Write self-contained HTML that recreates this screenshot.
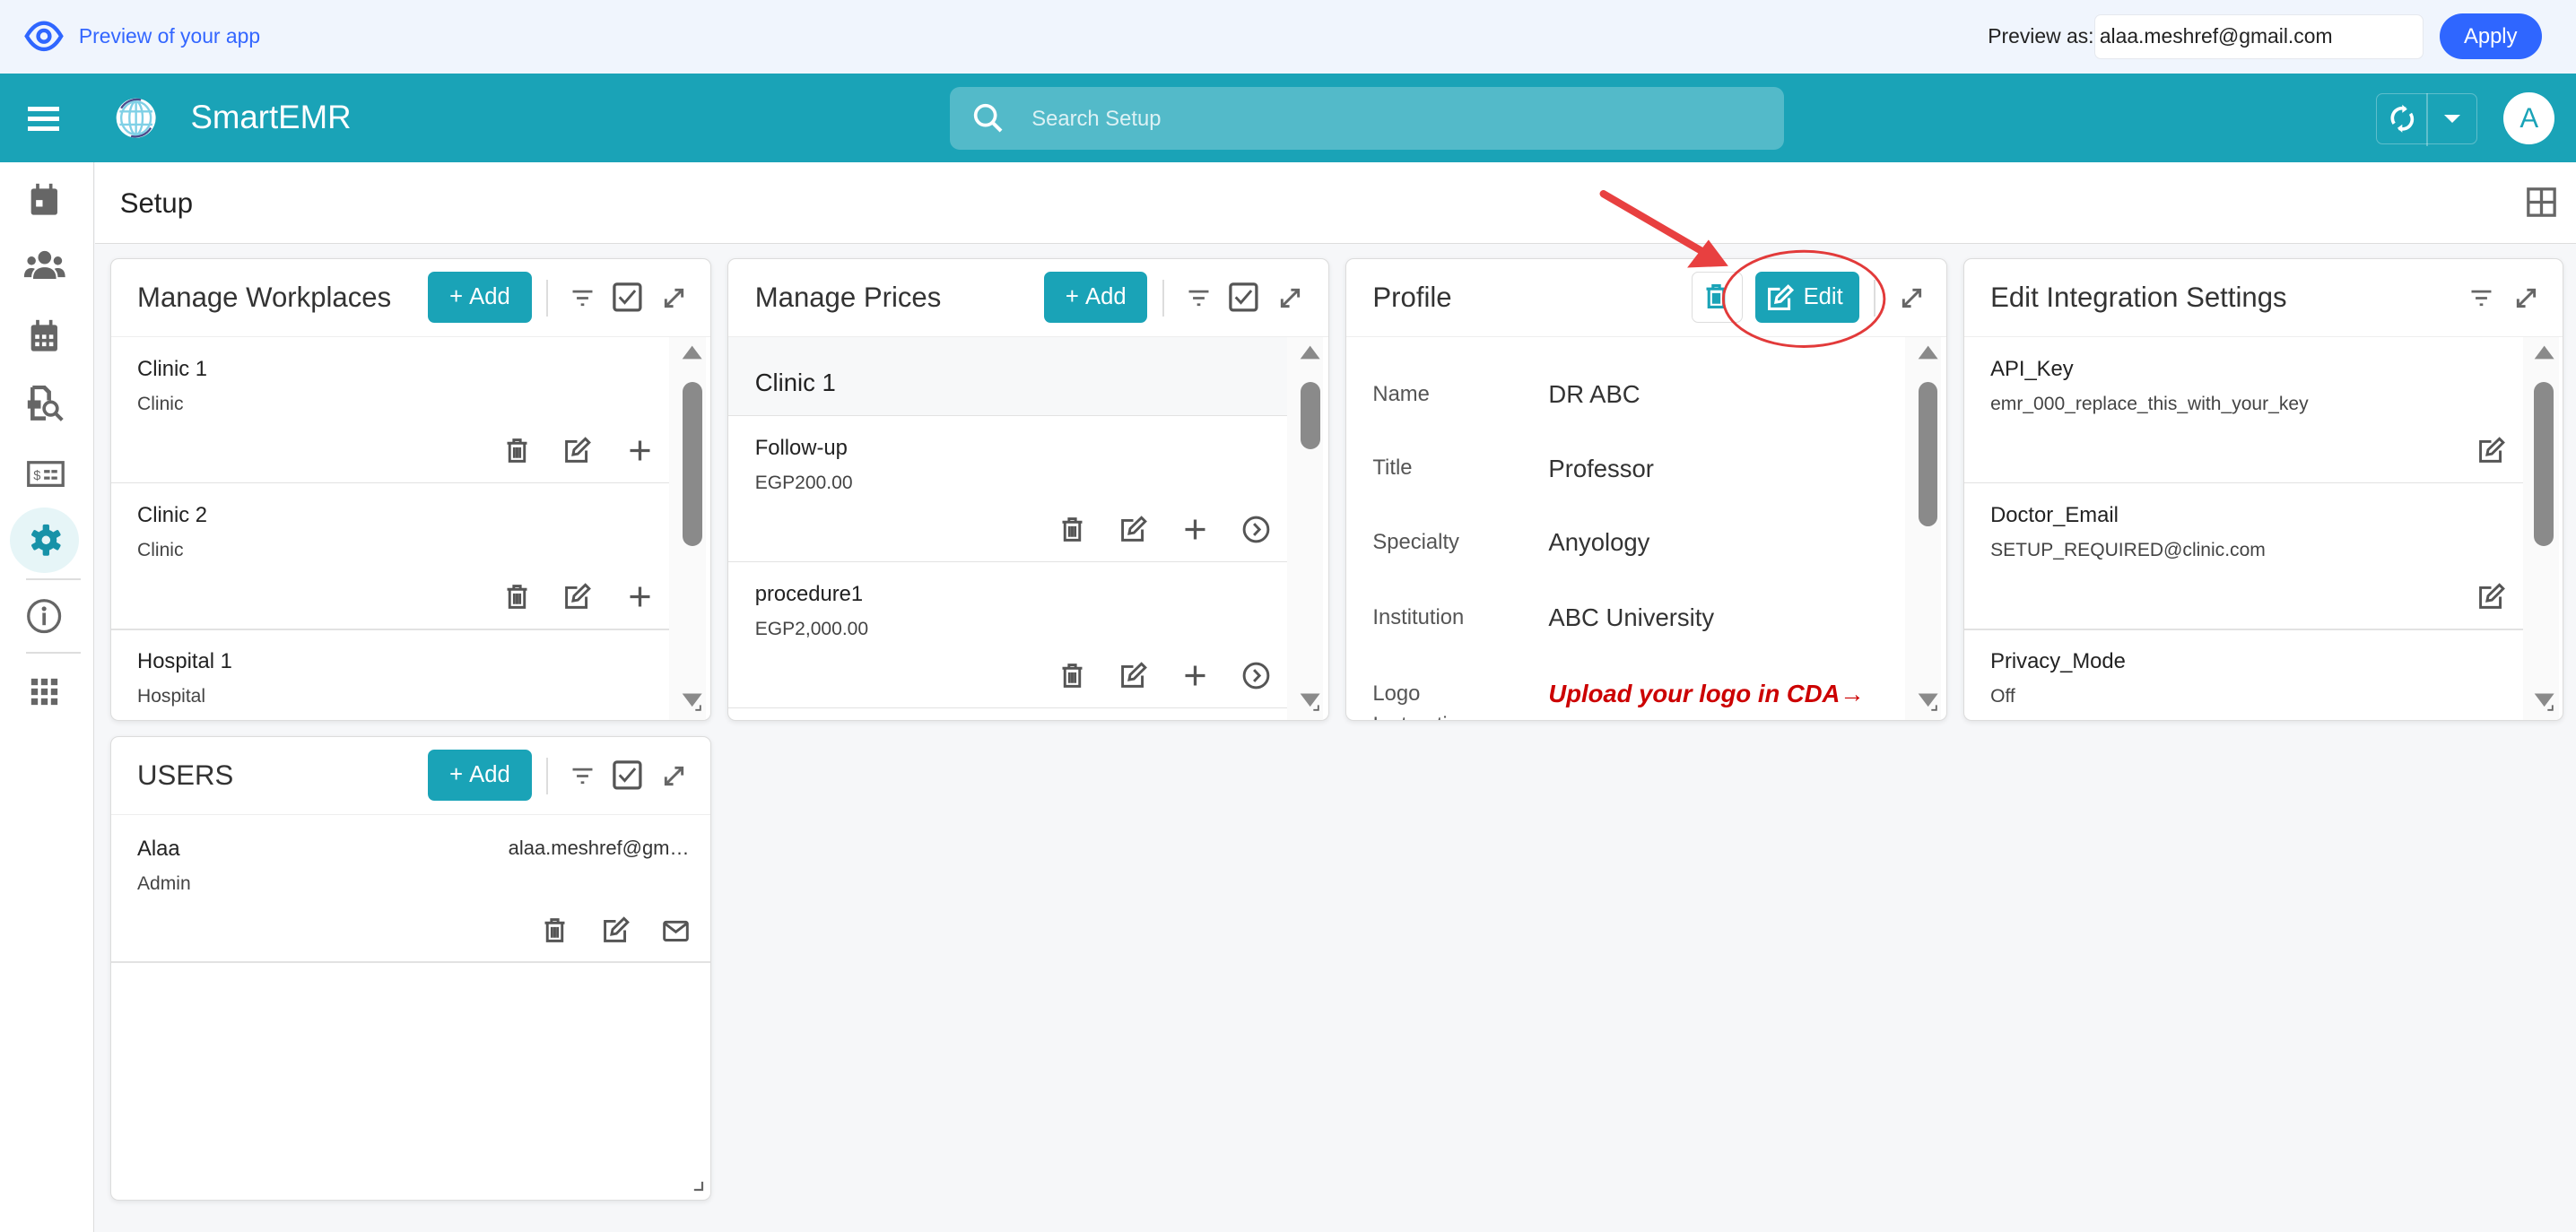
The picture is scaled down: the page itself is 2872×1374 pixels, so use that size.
<!DOCTYPE html>
<html><head><meta charset="utf-8">
<style>
html,body{margin:0;padding:0;background:#f6f7f9;overflow:hidden}
body{width:2872px;height:1374px}
#w{position:absolute;left:0;top:0;width:1568px;height:750px;zoom:1.83163;font-family:"Liberation Sans",sans-serif;color:#222}
.a{position:absolute}
.top{left:0;top:0;width:1568px;height:45px;background:#f0f5fd}
.hdr{left:0;top:45px;width:1568px;height:54px;background:#1aa3b7}
.side{left:0;top:99px;width:57px;height:651px;background:#fff;border-right:1px solid #ddd}
.setup{left:58px;top:99px;width:1510px;height:49px;background:#fff;border-bottom:1px solid #ddd}
.card{background:#fff;border:1px solid #dcdcdc;border-radius:5px;box-shadow:0 1px 3px rgba(0,0,0,.08);overflow:hidden}
.ct{font-size:17px;color:#333;position:absolute;left:16px;top:14px}
.hl{position:absolute;left:0;right:0;top:47px;border-top:1px solid #eee}
.add{position:absolute;width:63px;height:31px;background:#1aa3b7;border-radius:4px;color:#fff;font-size:14px;line-height:31px;text-align:center}
.vd{position:absolute;width:1px;height:22px;background:#ddd}
.it{position:absolute;font-size:13px;color:#222}
.sub{position:absolute;font-size:11.5px;color:#444}
.sep{position:absolute;height:1px;background:#e2e2e2}
svg.i{position:absolute;width:18px;height:18px}
.sb{position:absolute;width:22px;background:#fafafa}
</style></head><body><div id="w">
<svg width="0" height="0" style="position:absolute">
<defs>
<symbol id="trash" viewBox="0 0 18 18"><g fill="none" stroke="#555" stroke-width="1.6"><path d="M3 4.5h12M7 4.5V2.5h4v2M4.5 4.5v11h9v-11M7.3 7v6.5M9 7v6.5M10.7 7v6.5"/></g></symbol>
<symbol id="edit" viewBox="0 0 18 18"><g fill="none" stroke="#555" stroke-width="1.6"><path d="M9 3.5H2.5v12h12V9"/><path d="M6.5 11.5l.6-3L14 1.8l2.3 2.3-6.9 6.9z"/></g></symbol>
<symbol id="plus" viewBox="0 0 18 18"><path d="M9 3v12M3 9h12" stroke="#555" stroke-width="1.8"/></symbol>
<symbol id="chev" viewBox="0 0 18 18"><circle cx="9" cy="9" r="7.3" fill="none" stroke="#555" stroke-width="1.6"/><path d="M7.7 5.5L11 9l-3.3 3.5" fill="none" stroke="#555" stroke-width="1.6"/></symbol>
<symbol id="filt" viewBox="0 0 18 18"><path d="M3 5h12M5.5 9h7M8 13h2" stroke="#666" stroke-width="1.5"/></symbol>
<symbol id="chk" viewBox="0 0 18 18"><rect x="1.5" y="1.5" width="15" height="15" rx="1.5" fill="none" stroke="#555" stroke-width="1.7"/><path d="M4.5 9l3 3.2 6-7" fill="none" stroke="#555" stroke-width="1.5"/></symbol>
<symbol id="exp" viewBox="0 0 18 18"><path d="M4 14L14 4M9.5 4H14v4.5M4 9.5V14h4.5" fill="none" stroke="#666" stroke-width="1.6"/></symbol>
<symbol id="mail" viewBox="0 0 18 18"><rect x="2" y="4" width="14" height="11" rx="1" fill="none" stroke="#555" stroke-width="1.6"/><path d="M2.5 5l6.5 5 6.5-5" fill="none" stroke="#555" stroke-width="1.6"/></symbol>
<symbol id="sc" viewBox="0 0 16 230"><path d="M8 3l6 8H2z" fill="#8a8a8a"/></symbol>
</defs></svg>

<!-- top preview bar -->
<div class="a top"></div>
<svg class="a" style="left:15px;top:12px" width="24" height="20" viewBox="0 0 24 20"><path d="M1.5 10C5 4 8.5 2 12 2s7 2 10.5 8C19 16 15.5 18 12 18S5 16 1.5 10z" fill="none" stroke="#2f66ff" stroke-width="2.4"/><circle cx="12" cy="10" r="3.5" fill="none" stroke="#2f66ff" stroke-width="2.4"/></svg>
<div class="a" style="left:48px;top:15px;font-size:12.5px;color:#3366ff">Preview of your app</div>
<div class="a" style="left:1210px;top:15px;font-size:12.5px;color:#222">Preview as:</div>
<div class="a" style="left:1275px;top:9px;width:199px;height:26px;background:#fff;border:1px solid #e5e8ee;border-radius:4px"></div>
<div class="a" style="left:1278px;top:15px;font-size:12.5px;color:#222">alaa.meshref@gmail.com</div>
<div class="a" style="left:1485px;top:8px;width:62px;height:28px;background:#2f66ff;border-radius:14px;color:#fff;font-size:13px;text-align:center;line-height:28px">Apply</div>

<!-- header -->
<div class="a hdr"></div>
<div class="a" style="left:17px;top:65px;width:19px;height:2.5px;background:#fff;box-shadow:0 6px 0 #fff,0 12px 0 #fff"></div>
<svg class="a" style="left:69px;top:58px" width="28" height="28" viewBox="0 0 28 28"><circle cx="14" cy="14" r="12" fill="#fff"/><g fill="none" stroke="#7fd0e6" stroke-width="1.3"><ellipse cx="14" cy="14" rx="9" ry="10"/><ellipse cx="14" cy="14" rx="4" ry="10"/><path d="M4 10h20M4 18h20M14 4v20"/></g><path d="M5 8a11 11 0 0 1 12-5M23 20a11 11 0 0 1-12 5" fill="none" stroke="#4a4a8a" stroke-width="1.2"/></svg>
<div class="a" style="left:116px;top:60px;font-size:20px;color:#fff">SmartEMR</div>
<div class="a" style="left:578px;top:53px;width:508px;height:38px;background:rgba(255,255,255,.25);border-radius:6px"></div>
<svg class="a" style="left:592px;top:62px" width="20" height="20" viewBox="0 0 20 20"><circle cx="8" cy="8" r="6" fill="none" stroke="#fff" stroke-width="2"/><path d="M12.5 12.5l5 5" stroke="#fff" stroke-width="2.2"/></svg>
<div class="a" style="left:628px;top:65px;font-size:13px;color:rgba(255,255,255,.8)">Search Setup</div>
<div class="a" style="left:1446px;top:57px;width:61px;height:30px;border:1px solid rgba(255,255,255,.3);border-radius:4px"></div>
<div class="a" style="left:1477px;top:57px;width:1px;height:32px;background:rgba(255,255,255,.3)"></div>
<svg class="a" style="left:1452px;top:62px" width="20" height="20" viewBox="0 0 20 20"><path d="M5 13a6 6 0 0 1 7-9M15 7a6 6 0 0 1-7 9" fill="none" stroke="#fff" stroke-width="2"/><path d="M10 1.5l3 2.7-3 2.3zM10 18.5l-3-2.7 3-2.3z" fill="#fff"/></svg>
<div class="a" style="left:1488px;top:70px;width:0;height:0;border-left:5px solid transparent;border-right:5px solid transparent;border-top:5px solid #fff"></div>
<div class="a" style="left:1524px;top:56px;width:31px;height:32px;border-radius:50%;background:#fff;color:#1aa3b7;font-size:17px;text-align:center;line-height:32px">A</div>

<!-- sidebar -->
<div class="a side"></div>
<svg class="a" style="left:17px;top:111px" width="20" height="22" viewBox="0 0 20 22"><rect x="2" y="4" width="16" height="16" rx="1.5" fill="#666"/><rect x="5" y="1" width="2" height="4" fill="#666"/><rect x="13" y="1" width="2" height="4" fill="#666"/><rect x="5" y="11" width="4" height="4" fill="#fff"/></svg>
<svg class="a" style="left:14px;top:152px" width="26" height="20" viewBox="0 0 26 20"><circle cx="13" cy="5" r="4" fill="#666"/><circle cx="5" cy="7" r="2.6" fill="#666"/><circle cx="21" cy="7" r="2.6" fill="#666"/><path d="M6 18c0-5 3-7 7-7s7 2 7 7z M0.5 17c0-4 2-5.5 4.5-5.5 1.5 0 2 .5 2 .5-1.5 1.5-2 3-2 5zM25.5 17c0-4-2-5.5-4.5-5.5-1.5 0-2 .5-2 .5 1.5 1.5 2 3 2 5z" fill="#666"/></svg>
<svg class="a" style="left:17px;top:194px" width="20" height="22" viewBox="0 0 20 22"><rect x="2" y="4" width="16" height="16" rx="1.5" fill="#666"/><rect x="5" y="1" width="2" height="4" fill="#666"/><rect x="13" y="1" width="2" height="4" fill="#666"/><g fill="#fff"><rect x="4.5" y="10" width="2.5" height="2.5"/><rect x="8.7" y="10" width="2.5" height="2.5"/><rect x="13" y="10" width="2.5" height="2.5"/><rect x="4.5" y="14.5" width="2.5" height="2.5"/><rect x="8.7" y="14.5" width="2.5" height="2.5"/><rect x="13" y="14.5" width="2.5" height="2.5"/></g></svg>
<svg class="a" style="left:16px;top:235px" width="24" height="22" viewBox="0 0 24 22"><path d="M4 1h7l3 3v5" fill="none" stroke="#666" stroke-width="2.5"/><path d="M4 1v19h8" fill="none" stroke="#666" stroke-width="2.5"/><rect x="1" y="9" width="8" height="5" fill="#666"/><circle cx="15" cy="14" r="4" fill="none" stroke="#666" stroke-width="2"/><path d="M18 17l4 4" stroke="#666" stroke-width="2.2"/></svg>
<svg class="a" style="left:16px;top:280px" width="24" height="18" viewBox="0 0 24 18"><rect x="1.5" y="1.5" width="21" height="14" fill="none" stroke="#666" stroke-width="1.8"/><text x="4.5" y="12" font-size="8" fill="#666" font-family="Liberation Sans">$</text><path d="M11 7h8M11 11h8" stroke="#666" stroke-width="1.8" stroke-dasharray="3.5 1"/></svg>
<div class="a" style="left:6px;top:309px;width:42px;height:40px;border-radius:50%;background:#e6f5f7"></div>
<svg class="a" style="left:18px;top:319px" width="20" height="20" viewBox="0 0 20 20"><g fill="#1792a8"><circle cx="10" cy="10" r="6.5"/><rect x="8" y="0.5" width="4" height="19" rx="1"/><rect x="8" y="0.5" width="4" height="19" rx="1" transform="rotate(60 10 10)"/><rect x="8" y="0.5" width="4" height="19" rx="1" transform="rotate(120 10 10)"/></g><circle cx="10" cy="10" r="2.6" fill="#e6f5f7"/></svg>
<div class="a" style="left:16px;top:352px;width:33px;height:1px;background:#ddd"></div>
<svg class="a" style="left:16px;top:364px" width="22" height="22" viewBox="0 0 22 22"><circle cx="11" cy="11" r="9.5" fill="none" stroke="#666" stroke-width="1.8"/><circle cx="11" cy="6.5" r="1.4" fill="#666"/><rect x="10" y="9" width="2" height="7.5" fill="#666"/></svg>
<div class="a" style="left:16px;top:397px;width:33px;height:1px;background:#ddd"></div>
<svg class="a" style="left:18px;top:412px" width="18" height="18" viewBox="0 0 18 18"><g fill="#666"><rect x="1" y="1" width="4" height="4"/><rect x="7" y="1" width="4" height="4"/><rect x="13" y="1" width="4" height="4"/><rect x="1" y="7" width="4" height="4"/><rect x="7" y="7" width="4" height="4"/><rect x="13" y="7" width="4" height="4"/><rect x="1" y="13" width="4" height="4"/><rect x="7" y="13" width="4" height="4"/><rect x="13" y="13" width="4" height="4"/></g></svg>

<!-- setup bar -->
<div class="a setup"></div>
<div class="a" style="left:73px;top:114px;font-size:17px;color:#222">Setup</div>
<svg class="a" style="left:1538px;top:114px" width="18" height="18" viewBox="0 0 18 18"><rect x="1" y="1" width="16" height="16" fill="none" stroke="#666" stroke-width="1.8"/><path d="M9 1v16M1 9h16" stroke="#666" stroke-width="1.8"/></svg>

<!-- Card 1: Manage Workplaces -->
<div class="a card" style="left:67px;top:157px;width:365px;height:281px">
 <div class="ct">Manage Workplaces</div>
 <div class="add" style="left:193px;top:8px">+&nbsp;Add</div>
 <div class="vd" style="left:265px;top:13px"></div>
 <svg class="i" style="left:278px;top:15px"><use href="#filt"/></svg>
 <svg class="i" style="left:305px;top:14px;width:19px;height:19px"><use href="#chk"/></svg>
 <svg class="i" style="left:334px;top:15px"><use href="#exp"/></svg>
 <div class="hl"></div>
 <div class="sb" style="left:340px;top:48px;height:233px"></div>
 <svg class="a" style="left:346px;top:51px" width="16" height="14"><path d="M8 2l6 8H2z" fill="#8a8a8a"/></svg>
 <div class="a" style="left:348px;top:75px;width:12px;height:100px;border-radius:6px;background:#8a8a8a"></div>
 <svg class="a" style="left:346px;top:262px" width="16" height="14"><path d="M2 3h12L8 11z" fill="#8a8a8a"/><path d="M13 10v3h-3" stroke="#666" fill="none"/></svg>
 <div class="it" style="left:16px;top:60px">Clinic 1</div><div class="sub" style="left:16px;top:82px">Clinic</div>
 <svg class="i" style="left:238px;top:108px"><use href="#trash"/></svg><svg class="i" style="left:275px;top:108px"><use href="#edit"/></svg><svg class="i" style="left:313px;top:108px"><use href="#plus"/></svg>
 <div class="sep" style="left:0;top:136px;width:340px"></div>
 <div class="it" style="left:16px;top:149px">Clinic 2</div><div class="sub" style="left:16px;top:171px">Clinic</div>
 <svg class="i" style="left:238px;top:197px"><use href="#trash"/></svg><svg class="i" style="left:275px;top:197px"><use href="#edit"/></svg><svg class="i" style="left:313px;top:197px"><use href="#plus"/></svg>
 <div class="sep" style="left:0;top:225px;width:340px"></div>
 <div class="it" style="left:16px;top:238px">Hospital 1</div><div class="sub" style="left:16px;top:260px">Hospital</div>
</div>

<!-- Card 2: Manage Prices -->
<div class="a card" style="left:443px;top:157px;width:365px;height:281px">
 <div class="ct">Manage Prices</div>
 <div class="add" style="left:192px;top:8px">+&nbsp;Add</div>
 <div class="vd" style="left:264px;top:13px"></div>
 <svg class="i" style="left:277px;top:15px"><use href="#filt"/></svg>
 <svg class="i" style="left:304px;top:14px;width:19px;height:19px"><use href="#chk"/></svg>
 <svg class="i" style="left:333px;top:15px"><use href="#exp"/></svg>
 <div class="hl"></div>
 <div class="a" style="left:0;top:48px;width:340px;height:47px;background:#f7f8f9;border-bottom:1px solid #e2e2e2"></div>
 <div class="a" style="left:16px;top:67px;font-size:15px;color:#222">Clinic 1</div>
 <div class="sb" style="left:340px;top:48px;height:233px"></div>
 <svg class="a" style="left:346px;top:51px" width="16" height="14"><path d="M8 2l6 8H2z" fill="#8a8a8a"/></svg>
 <div class="a" style="left:348px;top:75px;width:12px;height:41px;border-radius:6px;background:#8a8a8a"></div>
 <svg class="a" style="left:346px;top:262px" width="16" height="14"><path d="M2 3h12L8 11z" fill="#8a8a8a"/><path d="M13 10v3h-3" stroke="#666" fill="none"/></svg>
 <div class="it" style="left:16px;top:108px">Follow-up</div><div class="sub" style="left:16px;top:130px">EGP200.00</div>
 <svg class="i" style="left:200px;top:156px"><use href="#trash"/></svg><svg class="i" style="left:237px;top:156px"><use href="#edit"/></svg><svg class="i" style="left:275px;top:156px"><use href="#plus"/></svg><svg class="i" style="left:312px;top:156px"><use href="#chev"/></svg>
 <div class="sep" style="left:0;top:184px;width:340px"></div>
 <div class="it" style="left:16px;top:197px">procedure1</div><div class="sub" style="left:16px;top:219px">EGP2,000.00</div>
 <svg class="i" style="left:200px;top:245px"><use href="#trash"/></svg><svg class="i" style="left:237px;top:245px"><use href="#edit"/></svg><svg class="i" style="left:275px;top:245px"><use href="#plus"/></svg><svg class="i" style="left:312px;top:245px"><use href="#chev"/></svg>
 <div class="sep" style="left:0;top:273px;width:340px"></div>
</div>

<!-- Card 3: Profile -->
<div class="a card" style="left:819px;top:157px;width:365px;height:281px">
 <div class="ct">Profile</div>
 <div class="a" style="left:210px;top:8px;width:30px;height:30px;border:1px solid #ddd;border-radius:4px"></div>
 <svg class="a" style="left:216px;top:14px" width="18" height="18" viewBox="0 0 18 18"><path d="M3 4.5h12M7 4.5V2.5h4v2M4.5 4.5v11h9v-11M7.3 7v6.5M9 7v6.5M10.7 7v6.5" fill="none" stroke="#1aa3b7" stroke-width="1.7"/></svg>
 <div class="add" style="left:249px;top:8px;width:63px">&nbsp;&nbsp;&nbsp;&nbsp;&nbsp;Edit</div>
 <svg class="a" style="left:255px;top:15px" width="18" height="18" viewBox="0 0 18 18"><path d="M9 3.5H2.5v12h12V9" fill="none" stroke="#fff" stroke-width="1.7"/><path d="M6.5 11.5l.6-3L14 1.8l2.3 2.3-6.9 6.9z" fill="none" stroke="#fff" stroke-width="1.7"/></svg>
 <div class="vd" style="left:321px;top:13px"></div>
 <svg class="i" style="left:335px;top:15px"><use href="#exp"/></svg>
 <div class="hl"></div>
 <div class="sb" style="left:340px;top:48px;height:233px"></div>
 <svg class="a" style="left:346px;top:51px" width="16" height="14"><path d="M8 2l6 8H2z" fill="#8a8a8a"/></svg>
 <div class="a" style="left:348px;top:75px;width:12px;height:88px;border-radius:6px;background:#8a8a8a"></div>
 <svg class="a" style="left:346px;top:262px" width="16" height="14"><path d="M2 3h12L8 11z" fill="#8a8a8a"/><path d="M13 10v3h-3" stroke="#666" fill="none"/></svg>
 <div class="a" style="left:16px;top:75px;font-size:13px;color:#555">Name</div><div class="a" style="left:123px;top:74px;font-size:15px;color:#333">DR ABC</div>
 <div class="a" style="left:16px;top:120px;font-size:13px;color:#555">Title</div><div class="a" style="left:123px;top:119px;font-size:15px;color:#333">Professor</div>
 <div class="a" style="left:16px;top:165px;font-size:13px;color:#555">Specialty</div><div class="a" style="left:123px;top:164px;font-size:15px;color:#333">Anyology</div>
 <div class="a" style="left:16px;top:211px;font-size:13px;color:#555">Institution</div><div class="a" style="left:123px;top:210px;font-size:15px;color:#333">ABC University</div>
 <div class="a" style="left:16px;top:256px;font-size:13px;color:#555;line-height:19px">Logo<br>Instructions</div>
 <div class="a" style="left:123px;top:254px;font-size:15px;color:#cc0000;font-weight:bold;font-style:italic;line-height:22px;width:215px">Upload your logo in CDA→ Settings → Profile tab</div>
</div>

<!-- Card 4: Edit Integration Settings -->
<div class="a card" style="left:1195px;top:157px;width:364px;height:281px">
 <div class="ct">Edit Integration Settings</div>
 <svg class="i" style="left:306px;top:15px"><use href="#filt"/></svg>
 <svg class="i" style="left:333px;top:15px"><use href="#exp"/></svg>
 <div class="hl"></div>
 <div class="sb" style="left:340px;top:48px;height:233px"></div>
 <svg class="a" style="left:345px;top:51px" width="16" height="14"><path d="M8 2l6 8H2z" fill="#8a8a8a"/></svg>
 <div class="a" style="left:347px;top:75px;width:12px;height:100px;border-radius:6px;background:#8a8a8a"></div>
 <svg class="a" style="left:345px;top:262px" width="16" height="14"><path d="M2 3h12L8 11z" fill="#8a8a8a"/><path d="M13 10v3h-3" stroke="#666" fill="none"/></svg>
 <div class="it" style="left:16px;top:60px">API_Key</div><div class="sub" style="left:16px;top:82px">emr_000_replace_this_with_your_key</div>
 <svg class="i" style="left:312px;top:108px"><use href="#edit"/></svg>
 <div class="sep" style="left:0;top:136px;width:340px"></div>
 <div class="it" style="left:16px;top:149px">Doctor_Email</div><div class="sub" style="left:16px;top:171px">SETUP_REQUIRED@clinic.com</div>
 <svg class="i" style="left:312px;top:197px"><use href="#edit"/></svg>
 <div class="sep" style="left:0;top:225px;width:340px"></div>
 <div class="it" style="left:16px;top:238px">Privacy_Mode</div><div class="sub" style="left:16px;top:260px">Off</div>
</div>

<!-- Card 5: USERS -->
<div class="a card" style="left:67px;top:448px;width:365px;height:282px">
 <div class="ct">USERS</div>
 <div class="add" style="left:193px;top:8px">+&nbsp;Add</div>
 <div class="vd" style="left:265px;top:13px"></div>
 <svg class="i" style="left:278px;top:15px"><use href="#filt"/></svg>
 <svg class="i" style="left:305px;top:14px;width:19px;height:19px"><use href="#chk"/></svg>
 <svg class="i" style="left:334px;top:15px"><use href="#exp"/></svg>
 <div class="hl"></div>
 <div class="it" style="left:16px;top:61px">Alaa</div>
 <div class="a" style="left:240px;top:61px;width:112px;font-size:12px;color:#333;text-align:right">alaa.meshref@gm…</div>
 <div class="sub" style="left:16px;top:83px">Admin</div>
 <svg class="i" style="left:261px;top:109px"><use href="#trash"/></svg><svg class="i" style="left:298px;top:109px"><use href="#edit"/></svg><svg class="i" style="left:335px;top:109px"><use href="#mail"/></svg>
 <div class="sep" style="left:0;top:137px;width:365px"></div>
 <svg class="a" style="left:354px;top:270px" width="8" height="8"><path d="M6 1v5H1" stroke="#666" fill="none" stroke-width="1.2"/></svg>
</div>

<!-- annotation -->
<svg class="a" style="left:0;top:0" width="1568" height="750" viewBox="0 0 1568 750">
 <ellipse cx="1098" cy="182" rx="49" ry="29" fill="none" stroke="#e23a3a" stroke-width="1.6"/>
 <path d="M976 118L1036 153" stroke="#e84040" stroke-width="4.5" stroke-linecap="round"/>
 <path d="M1052 162L1027 163L1040 146z" fill="#e84040"/>
</svg>
</div></body></html>
